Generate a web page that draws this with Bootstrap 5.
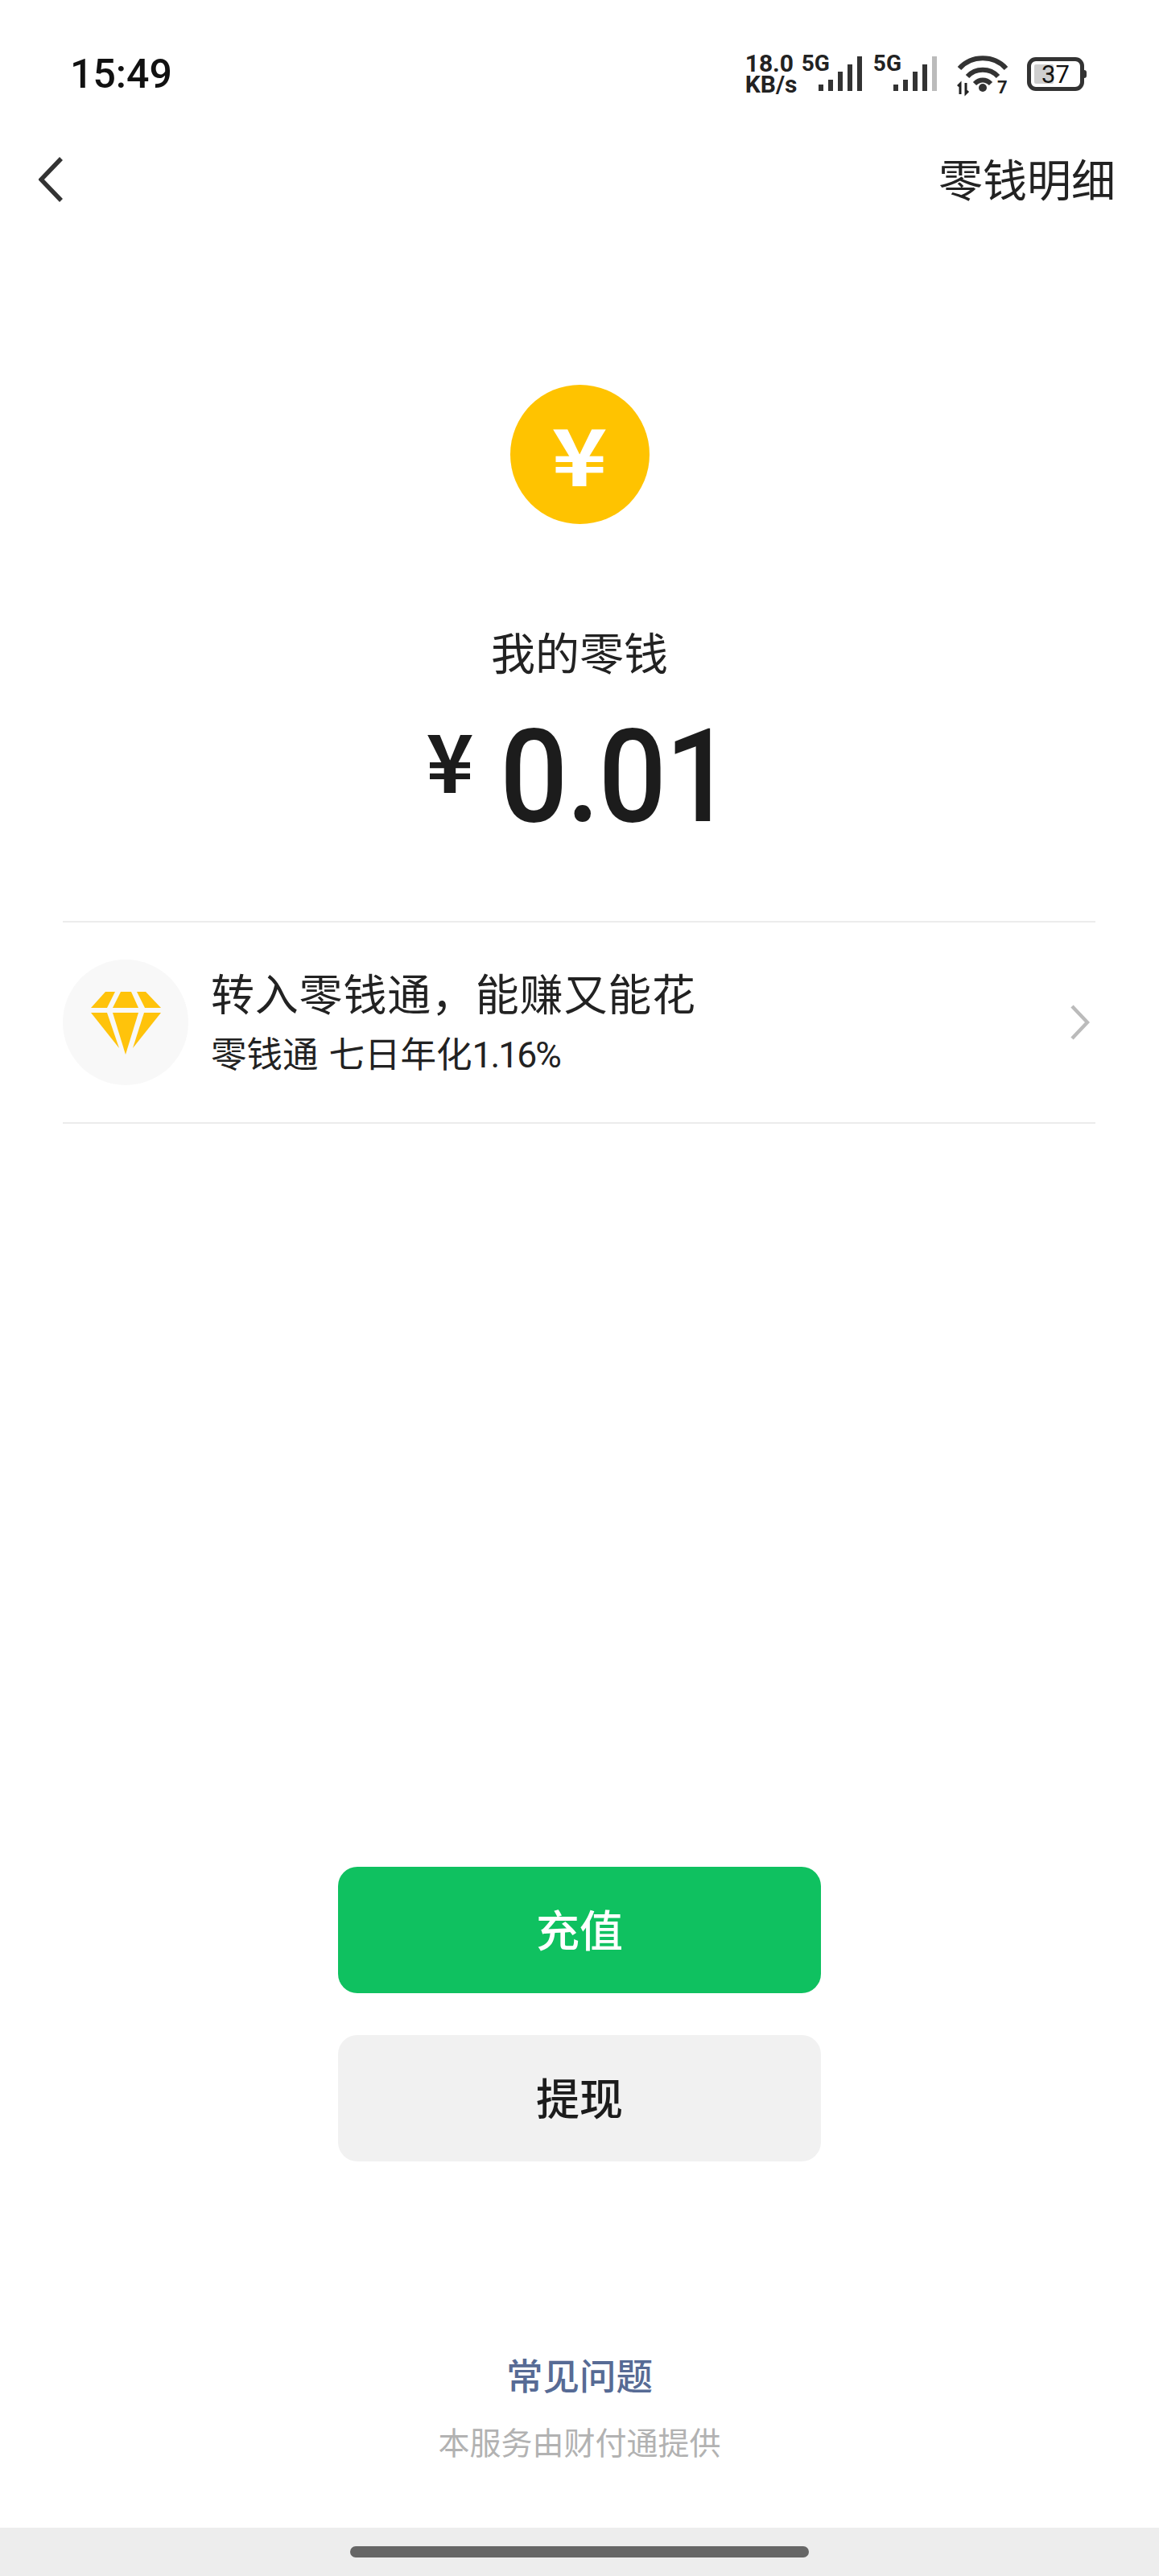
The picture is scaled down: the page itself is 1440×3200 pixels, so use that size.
<!DOCTYPE html>
<html lang="zh-CN">
<head>
  <meta charset="UTF-8">
  <meta name="viewport" content="width=device-width, initial-scale=1.0">
  <title>我的零钱</title>
  <link href="https://cdn.jsdelivr.net/npm/bootstrap@5.3.0/dist/css/bootstrap.min.css" rel="stylesheet">
  <style>
    body {
      font-family: "Noto Sans CJK SC", "Liberation Sans", sans-serif;
      background-color: #fff;
      color: #1c1c1c;
    }
    .page-wrap { height: 3200px; }
    .status-row { height: 184px; padding: 0 90px 0 87px; }
    .status-time { font-family: Roboto, sans-serif; font-size: 50px; font-weight: 500; color: #111; line-height: 1; }
    .net-speed { font-family: Roboto, sans-serif; font-weight: 700; font-size: 30px; line-height: 26px; color: #222; width: 70px; }
    .net-type { font-family: Roboto, sans-serif; font-weight: 700; font-size: 28px; line-height: 1; color: #222; margin-bottom: 26px; }
    .sig-first { margin-left: -14px; }
    .net-type-second { margin-left: 14px; }
    .sig-second { margin-left: -10px; }
    .wifi-icon { margin-left: 25px; margin-top: 8px; }
    .batt-box { width: 71px; height: 42px; margin-left: 23px; border: 5px solid #333; border-radius: 11px; font-family: Roboto, sans-serif; font-size: 31px; line-height: 1; color: #111; }
    .batt-fill { top: 4px; bottom: 4px; left: 4px; width: 24px; background-color: #cfcfcf; border-radius: 2px; }
    .batt-num { z-index: 1; }
    .batt-tip { width: 3px; height: 10px; background-color: #333; border-radius: 0 3px 3px 0; }
    .nav-row { height: 78px; padding: 0 54px 0 48px; }
    .nav-link-text { font-size: 55px; line-height: 1; color: #222; margin-top: -6px; }
    .coin-circle { width: 173px; height: 173px; background-color: #ffc300; margin-top: 216px; }
    .coin-yen { font-size: 98px; font-weight: 700; color: #fff; line-height: 1; margin-bottom: 8px; transform: scaleX(1.2); }
    .balance-label { font-size: 55px; line-height: 70px; margin-top: 122px; color: #222; }
    .balance-amount { height: 160px; margin-top: 42px; font-weight: 500; color: #1c1c1c; line-height: 160px; }
    .amount-yen { font-size: 100px; font-weight: 700; line-height: 1; margin-bottom: 46px; }
    .amount-num { font-family: Roboto, sans-serif; font-size: 162px; letter-spacing: -2px; margin-left: 33px; margin-right: -24px; transform: scaleX(.92); transform-origin: left center; }
    .lct-row { height: 252px; margin: 99px 79px 0 78px; border-top: 2px solid #ececec; border-bottom: 2px solid #ececec; }
    .lct-icon { width: 156px; height: 156px; background-color: #f8f8f8; margin-right: 28px; }
    .lct-title { font-size: 54px; line-height: 66px; letter-spacing: .8px; color: #222; }
    .lct-sub { font-size: 44.5px; line-height: 58px; color: #222; margin-top: 12px; word-spacing: 3px; }
    .lct-sub-num { font-family: Roboto, sans-serif; letter-spacing: -2px; }
    .lct-chevron { margin-right: 7px; }
    .action-btn { width: 600px; height: 157px; border-radius: 24px; border: 0; padding: 0 0 4px; font-size: 54px; font-weight: 500; }
    .btn-charge { background-color: #0fc160; color: #fff; }
    .btn-withdraw { background-color: #f1f1f1; color: #1c1c1c; }
    .btn-gap { gap: 52px; }
    .faq-link { font-size: 45.5px; line-height: 60px; font-weight: 500; color: #576b95; margin-top: 234px; text-decoration: none; }
    .provider-text { font-size: 39px; line-height: 50px; color: #b2b2b2; margin-top: 28px; }
    .home-bar { height: 60px; margin-top: 83px; background-color: #ededed; }
    .home-handle { width: 570px; height: 14px; background-color: #666; }
  </style>
</head>
<body>
  <div class="page-wrap d-flex flex-column">
    <!-- status bar -->
    <div class="status-row d-flex justify-content-between align-items-center">
      <div class="status-time">15:49</div>
      <div class="d-flex align-items-center">
        <div class="net-speed">18.0<br>KB/s</div>
        <div class="net-type">5G</div>
        <svg width="54" height="44" viewBox="0 0 54 44" class="sig-first">
          <g fill="#333">
            <rect x="0" y="35" width="6" height="8"/>
            <rect x="12" y="29" width="6" height="14"/>
            <rect x="24" y="19" width="6" height="24"/>
            <rect x="36" y="10" width="6" height="33"/>
            <rect x="48" y="0" width="6" height="43"/>
          </g>
        </svg>
        <div class="net-type net-type-second">5G</div>
        <svg width="54" height="44" viewBox="0 0 54 44" class="sig-second">
          <g fill="#333">
            <rect x="0" y="35" width="6" height="8"/>
            <rect x="12" y="29" width="6" height="14"/>
            <rect x="24" y="19" width="6" height="24"/>
            <rect x="36" y="10" width="6" height="33"/>
            <rect x="48" y="0" width="6" height="43" fill="#bbb"/>
          </g>
        </svg>
        <svg width="64" height="58" viewBox="0 0 64 58" class="wifi-icon">
          <g fill="none" stroke="#333" stroke-width="6">
            <path d="M3 18 C18 1 46 1 61 18"/>
            <path d="M13 28 C23 17 41 17 51 28"/>
            <path d="M22 37 C28 31 36 31 42 37"/>
          </g>
          <circle cx="32" cy="42" r="5" fill="#333"/>
          <g fill="none" stroke="#222" stroke-width="3">
            <path d="M4 50 V37 L1 40"/>
            <path d="M11 36 V49 L14 46"/>
          </g>
          <text x="50" y="49" font-family="Roboto, sans-serif" font-weight="700" font-size="22" fill="#222">7</text>
        </svg>
        <div class="batt-box position-relative d-flex align-items-center justify-content-center">
          <span class="batt-fill position-absolute"></span>
          <span class="batt-num position-relative">37</span>
        </div>
        <div class="batt-tip"></div>
      </div>
    </div>

    <!-- title bar -->
    <div class="nav-row d-flex justify-content-between align-items-center">
      <svg width="30" height="56" viewBox="0 0 30 56">
        <path d="M28 2 L3 28 L28 54" fill="none" stroke="#333" stroke-width="5.5"/>
      </svg>
      <div class="nav-link-text">零钱明细</div>
    </div>

    <!-- balance -->
    <div class="d-flex flex-column align-items-center">
      <div class="coin-circle rounded-circle d-flex align-items-center justify-content-center">
        <span class="coin-yen">¥</span>
      </div>
      <div class="balance-label">我的零钱</div>
      <div class="balance-amount d-flex align-items-center">
        <span class="amount-yen">¥</span>
        <span class="amount-num">0.01</span>
      </div>
    </div>

    <!-- lingqiantong row -->
    <div class="lct-row d-flex align-items-center">
      <div class="lct-icon rounded-circle d-flex align-items-center justify-content-center flex-shrink-0">
        <svg width="87" height="79" viewBox="0 0 87 79">
          <g fill="#ffc30b">
            <polygon points="0,21 18,1 30,1 20,21"/>
            <polygon points="27,21 37,1 50,1 59,21"/>
            <polygon points="67,21 57,1 68,1 87,21"/>
            <polygon points="0,27 20,27 35,71"/>
            <polygon points="27,27 59,27 43,79"/>
            <polygon points="66,27 87,27 52,71"/>
          </g>
        </svg>
      </div>
      <div class="flex-grow-1">
        <div class="lct-title">转入零钱通，能赚又能花</div>
        <div class="lct-sub">零钱通 七日年化<span class="lct-sub-num">1.16%</span></div>
      </div>
      <svg width="24" height="44" viewBox="0 0 24 44" class="lct-chevron">
        <path d="M2 2 L21 22 L2 42" fill="none" stroke="#bbb" stroke-width="4.5"/>
      </svg>
    </div>

    <!-- buttons and footer -->
    <div class="mt-auto d-flex flex-column align-items-center">
      <div class="d-flex flex-column btn-gap">
        <button type="button" class="btn action-btn btn-charge">充值</button>
        <button type="button" class="btn action-btn btn-withdraw">提现</button>
      </div>
      <a href="#" class="faq-link">常见问题</a>
      <div class="provider-text">本服务由财付通提供</div>
    </div>

    <div class="home-bar d-flex align-items-center justify-content-center flex-shrink-0">
      <div class="home-handle rounded-pill"></div>
    </div>
  </div>

  <script src="https://cdn.jsdelivr.net/npm/bootstrap@5.3.0/dist/js/bootstrap.bundle.min.js"></script>
</body>
</html>
